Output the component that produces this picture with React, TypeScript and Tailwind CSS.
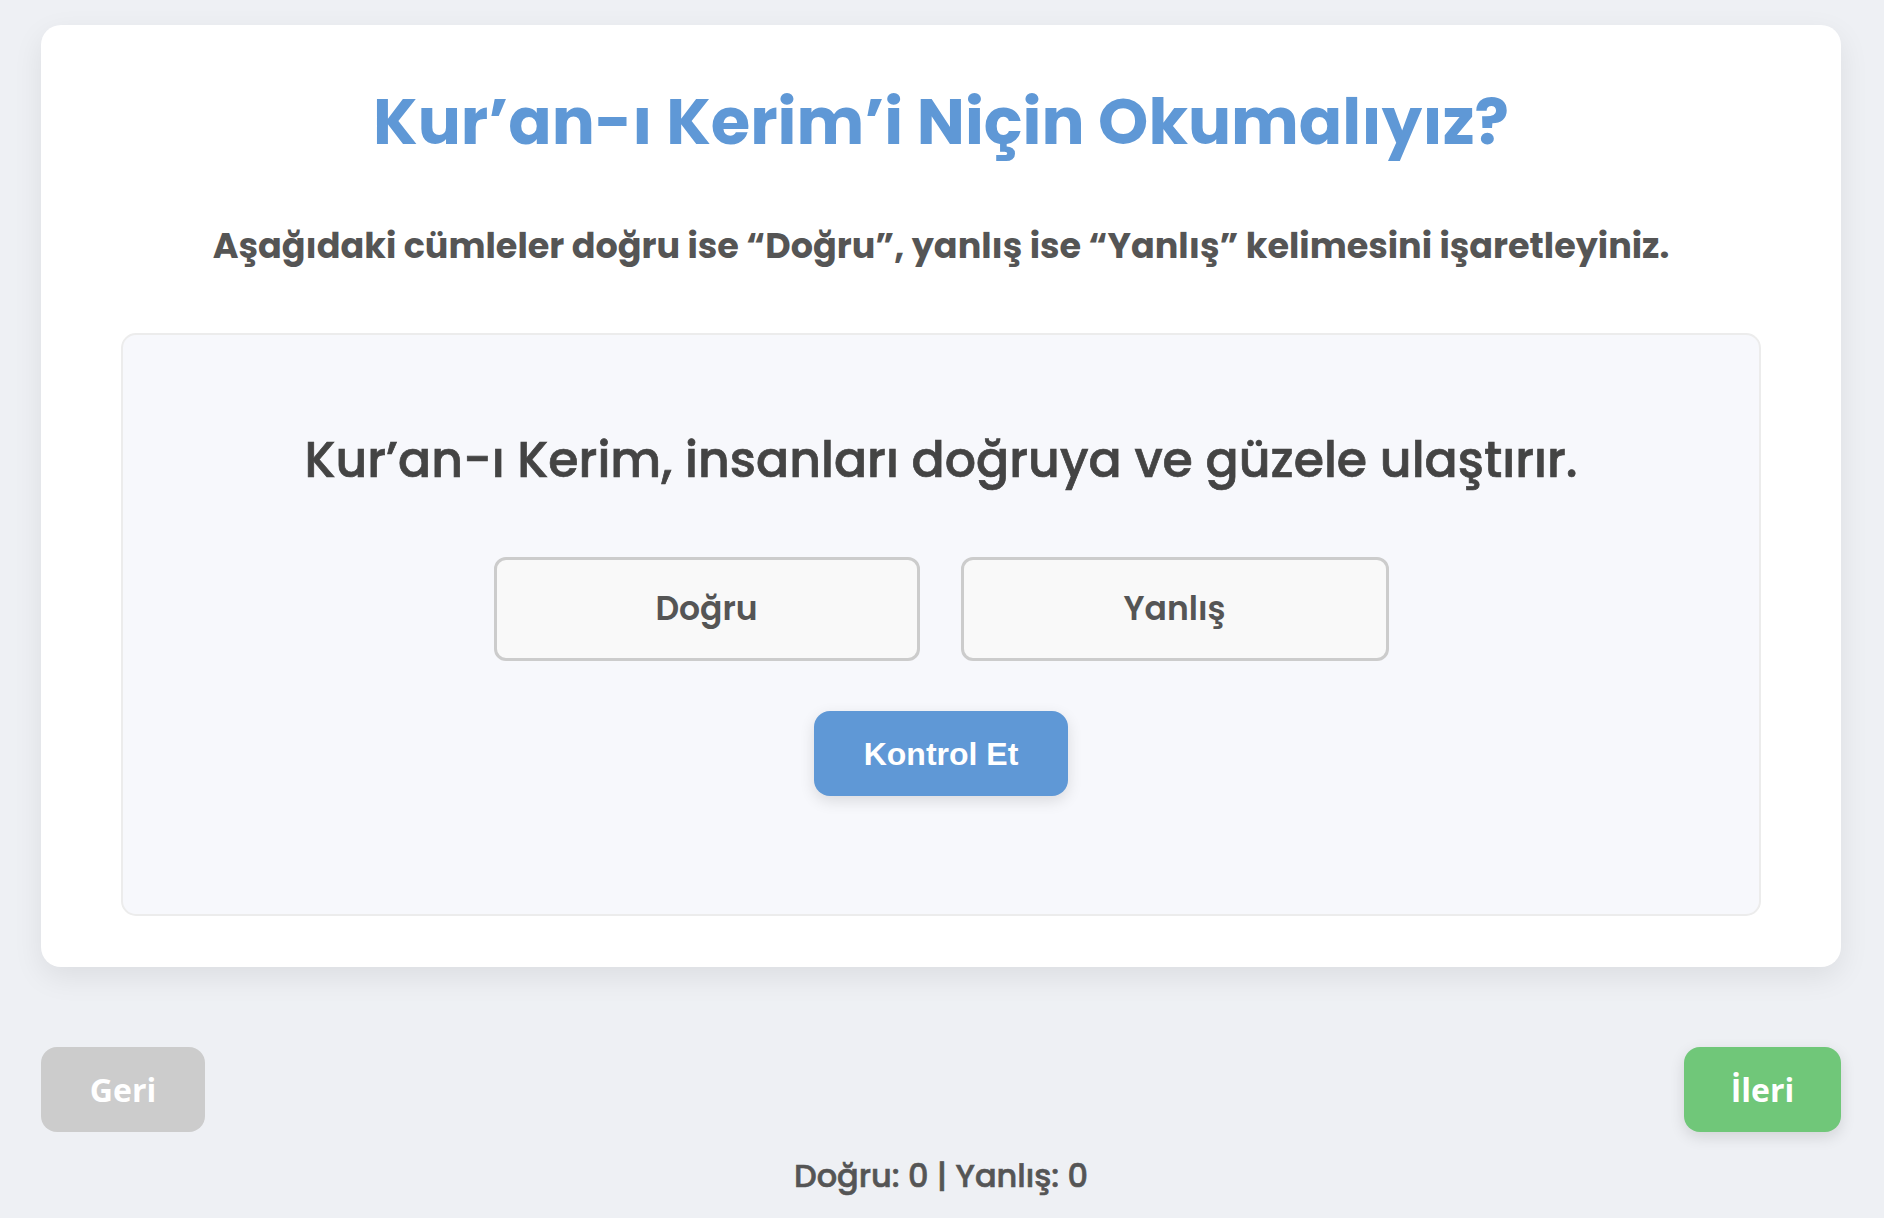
import { useState } from 'react';

const poppins = "font-['Poppins','Open_Sans',sans-serif]";

export default function App() {
  const [choice, setChoice] = useState<'dogru' | 'yanlis' | null>(null);
  const [score] = useState({ correct: 0, wrong: 0 });

  return (
    <div className="min-h-screen bg-[#eef0f4] pl-[41px] pr-[43px] pt-[25px] pb-[20px]">
      {/* question card */}
      <div className="rounded-[20px] bg-white px-[80px] pt-[57px] pb-[51px] shadow-[0_10px_30px_rgba(0,0,0,0.08)]">
        <h1 className={`${poppins} text-center text-[64px] leading-[80px] font-bold text-[#5f98d6]`}>
          Kur’an-ı Kerim’i Niçin Okumalıyız?
        </h1>
        <p className={`${poppins} mt-[59px] text-center text-[35px] leading-[50px] font-bold text-[#555]`}>
          Aşağıdaki cümleler doğru ise “Doğru”, yanlış ise “Yanlış” kelimesini işaretleyiniz.
        </p>

        <div className="mt-[62px] rounded-[15px] border-2 border-[#ececec] bg-[#f7f8fc] pt-[90px] pb-[118px]">
          <p className={`${poppins} text-center text-[49px] leading-[70px] font-medium text-[#444] [-webkit-text-stroke:0.7px_#444]`}>
            Kur’an-ı Kerim, insanları doğruya ve güzele ulaştırır.
          </p>

          <div className="mt-[62px] flex justify-center gap-[41px]">
            <button
              onClick={() => setChoice('dogru')}
              className={`${poppins} h-[104px] w-[426px] rounded-[12px] border-[3px] text-[33px] font-semibold text-[#555] ${
                choice === 'dogru' ? 'border-[#5f98d6] bg-[#eaf2fb]' : 'border-[#cccccc] bg-[#f9f9f9]'
              }`}
            >
              Doğru
            </button>
            <button
              onClick={() => setChoice('yanlis')}
              className={`${poppins} h-[104px] w-[428px] rounded-[12px] border-[3px] text-[33px] font-semibold text-[#555] ${
                choice === 'yanlis' ? 'border-[#5f98d6] bg-[#eaf2fb]' : 'border-[#cccccc] bg-[#f9f9f9]'
              }`}
            >
              Yanlış
            </button>
          </div>

          <div className="mt-[50px] flex justify-center">
            <button className="h-[85px] w-[254px] rounded-[16px] bg-[#5f98d6] font-['Liberation_Sans',Arial,sans-serif] text-[32px] font-bold text-white shadow-[0_5px_15px_rgba(0,0,0,0.12)]">
              Kontrol Et
            </button>
          </div>
        </div>
      </div>

      {/* navigation */}
      <div className="mt-[80px] flex items-center justify-between">
        <button className="h-[85px] w-[164px] rounded-[16px] bg-[#cccccc] font-['Open_Sans',sans-serif] text-[32px] font-bold text-white">
          Geri
        </button>
        <button className="h-[85px] w-[157px] rounded-[16px] bg-[#70c779] font-['Open_Sans',sans-serif] text-[32px] font-bold text-white shadow-[0_5px_15px_rgba(0,0,0,0.12)]">
          İleri
        </button>
      </div>

      <p className={`${poppins} mt-[24px] text-center text-[32px] leading-[40px] font-medium text-[#555] [-webkit-text-stroke:0.6px_#555]`}>
        Doğru: {score.correct} | Yanlış: {score.wrong}
      </p>
    </div>
  );
}
